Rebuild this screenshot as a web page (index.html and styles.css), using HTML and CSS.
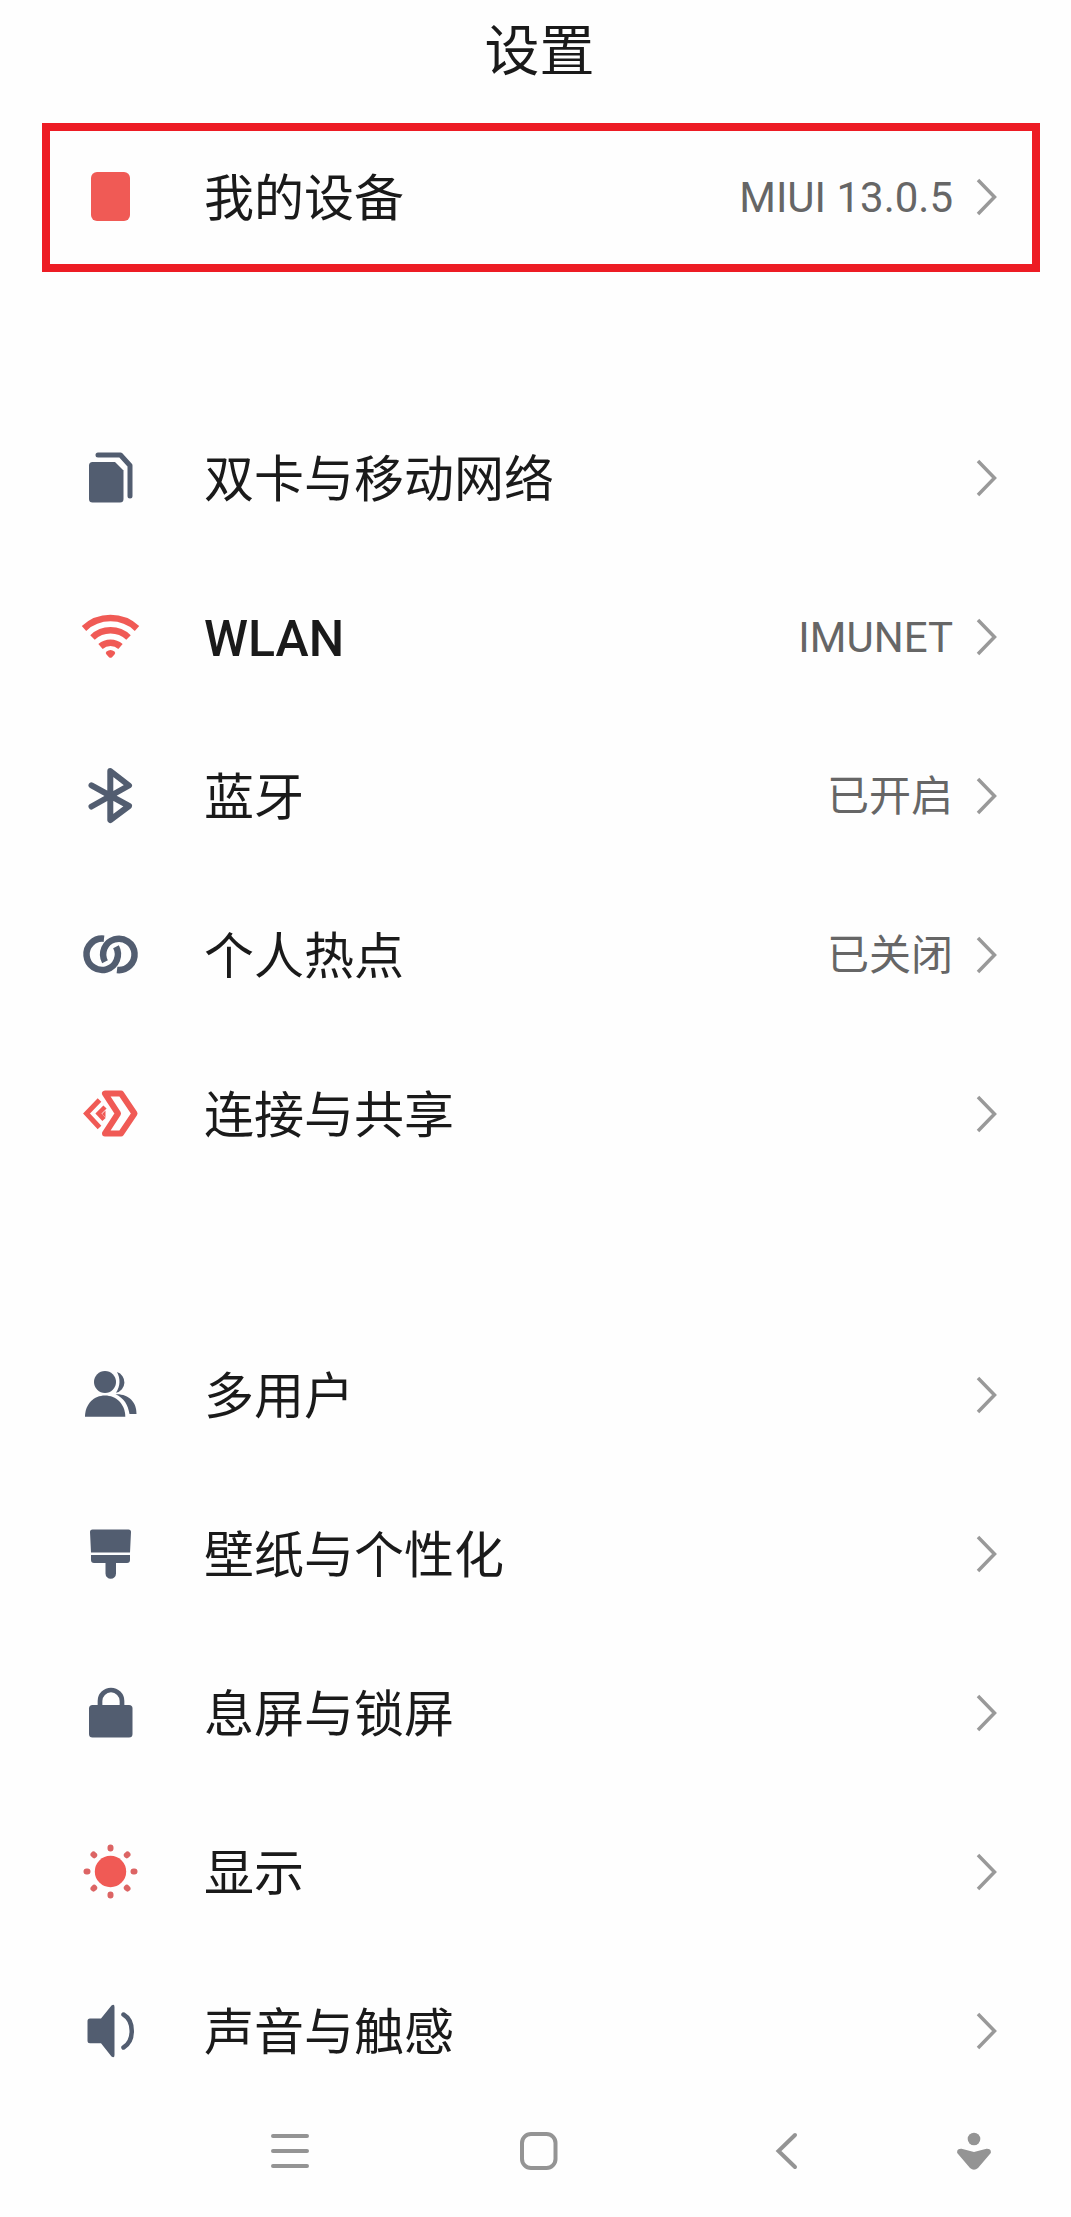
FILE: index.html
```html
<!DOCTYPE html>
<html lang="zh-CN">
<head>
<meta charset="utf-8">
<meta name="viewport" content="width=device-width, initial-scale=1">
<title>设置</title>
<link rel="stylesheet" href="styles.css">
</head>
<body>
<svg class="sprite" aria-hidden="true">
  <symbol id="chevron" viewBox="0 0 22 38"><path d="M2 2 18.500 19 2 36" fill="none" stroke="currentColor" stroke-width="3.500"/></symbol>
</svg>

<header class="header"><h1 class="title">设置</h1></header>

<main>
  <a class="row row-highlight" href="#device">
    <svg class="icon red" viewBox="0 0 61 61"><rect x="11" y="6" width="39" height="49" rx="6" fill="currentColor"/></svg>
    <span class="label">我的设备</span><span class="value">MIUI 13.0.5</span>
    <svg class="chevron"><use href="#chevron"/></svg>
  </a>

  <nav class="group" aria-label="网络与连接">
    <a class="row" href="#sim">
      <svg class="icon" viewBox="0 0 61 61"><path d="M12.500 15H35l8.500 8.500V52a3.500 3.500 0 0 1-3.500 3.500H12.500A3.500 3.500 0 0 1 9 52V18.500A3.500 3.500 0 0 1 12.500 15Z" fill="currentColor"/><path d="M18 8h22.500L50 18.500V49" fill="none" stroke="currentColor" stroke-width="5" stroke-linecap="round" stroke-linejoin="round"/></svg>
      <span class="label">双卡与移动网络</span>
      <svg class="chevron"><use href="#chevron"/></svg>
    </a>
    <a class="row" href="#wlan">
      <svg class="icon red" viewBox="0 0 61 61"><g fill="none" stroke="currentColor" stroke-width="6.500"><path d="M4 22.500A39 39 0 0 1 57 22.500"/><path d="M12.500 31.500A26 26 0 0 1 48.500 31.500"/><path d="M20.500 40.500A15 15 0 0 1 40.500 40.500"/></g><path d="M26.500 45.500Q30.500 42.500 34.500 45.500 36 47 34.500 48.500L32 51.200Q30.500 52.500 29 51.200L26.500 48.500Q25 47 26.500 45.500Z" fill="currentColor"/></svg>
      <span class="label label-strong">WLAN</span><span class="value">IMUNET</span>
      <svg class="chevron"><use href="#chevron"/></svg>
    </a>
    <a class="row" href="#bluetooth">
      <svg class="icon" viewBox="0 0 61 61"><path d="M11.500 20.300 49 41 30.300 55V6L49 20.500 11.500 41.500" fill="none" stroke="currentColor" stroke-width="6" stroke-linecap="round" stroke-linejoin="round"/></svg>
      <span class="label">蓝牙</span><span class="value">已开启</span>
      <svg class="chevron"><use href="#chevron"/></svg>
    </a>
    <a class="row" href="#hotspot">
      <svg class="icon" viewBox="0 0 61 61"><g fill="none" stroke="currentColor" stroke-width="6.500"><path d="M24 14.700A15.700 15.700 0 1 0 36 22.800"/><path d="M37 46A15.700 15.700 0 1 0 25 37.800"/></g></svg>
      <span class="label">个人热点</span><span class="value">已关闭</span>
      <svg class="chevron"><use href="#chevron"/></svg>
    </a>
    <a class="row" href="#share">
      <svg class="icon red" viewBox="0 0 61 61"><path d="M25 10.500H41L54.500 30.500 41 50.500H25L38 30.500Z" fill="none" stroke="currentColor" stroke-width="6" stroke-linejoin="round"/><path d="M19.500 17 6.500 30.500 19.500 44.500" fill="none" stroke="currentColor" stroke-width="5"/><path d="M25 24 18.500 30.500 24 36.500" fill="none" stroke="currentColor" stroke-width="4.500"/><path d="M22 31l3.500-3.500v7Z" fill="currentColor"/></svg>
      <span class="label">连接与共享</span>
      <svg class="chevron"><use href="#chevron"/></svg>
    </a>
  </nav>

  <nav class="group" aria-label="个性化与显示">
    <a class="row" href="#users">
      <svg class="icon" viewBox="0 0 61 61"><g fill="currentColor"><circle cx="25" cy="18" r="11"/><path d="M5 52.700C5 40 14 31.500 25 31.500S45.300 40 45.300 52.700Z"/><path d="M37 8A10.800 10.800 0 0 1 36 28.800C40.500 22 40.500 14.500 37 8Z"/><path d="M35.500 30.300C48 29.500 57 38 56.500 50H49.500C48 41 44 34 35.500 30.300Z"/></g></svg>
      <span class="label">多用户</span>
      <svg class="chevron"><use href="#chevron"/></svg>
    </a>
    <a class="row" href="#wallpaper">
      <svg class="icon" viewBox="0 0 61 61"><path d="M12.500 6.500h36q2.500 0 2.500 2.500l-1 20.500H11L10 9q0-2.500 2.500-2.500ZM11 32h39v5q0 3-3 3H36V50.500a5.200 5.200 0 0 1-10.500 0V40H14q-3 0-3-3Z" fill="currentColor"/></svg>
      <span class="label">壁纸与个性化</span>
      <svg class="chevron"><use href="#chevron"/></svg>
    </a>
    <a class="row" href="#lock">
      <svg class="icon" viewBox="0 0 61 61"><rect x="9" y="23" width="43.500" height="32.500" rx="3.500" fill="currentColor"/><path d="M20 25V19a11 11 0 0 1 22 0v6" fill="none" stroke="currentColor" stroke-width="4.700"/></svg>
      <span class="label">息屏与锁屏</span>
      <svg class="chevron"><use href="#chevron"/></svg>
    </a>
    <a class="row" href="#display">
      <svg class="icon red" viewBox="0 0 61 61"><circle cx="30.500" cy="30.500" r="15.700" fill="currentColor"/><path d="M30.500 6.500v1M30.500 53.500v1M6.500 30.500h1M53.500 30.500h1M13.500 13.500l.7.7M46.800 46.800l.7.7M13.500 47.500l.7-.7M46.800 14.200l.7-.7" stroke="#dc6464" stroke-width="6" stroke-linecap="round"/></svg>
      <span class="label">显示</span>
      <svg class="chevron"><use href="#chevron"/></svg>
    </a>
    <a class="row" href="#sound">
      <svg class="icon" viewBox="0 0 61 61"><path d="M10 18.500H21L31.500 5.500Q34.500 3.500 34.500 7V55Q34.500 58.500 31.500 56.500L21 43.300H10Q7.500 43.300 7.500 40.800V21Q7.500 18.500 10 18.500Z" fill="currentColor"/><path d="M43.500 14.500C54.500 21 54.500 41 43.500 47.500" fill="none" stroke="currentColor" stroke-width="4.500" stroke-linecap="round"/></svg>
      <span class="label">声音与触感</span>
      <svg class="chevron"><use href="#chevron"/></svg>
    </a>
  </nav>
</main>

<footer class="navbar">
  <button class="key" aria-label="最近任务"><svg class="key-icon" viewBox="0 0 40 40"><path d="M3 5H37M3 20H37M3 35H37" stroke="currentColor" stroke-width="4" stroke-linecap="round"/></svg></button>
  <button class="key" aria-label="主屏幕"><svg class="key-icon" viewBox="0 0 40 40"><rect x="3" y="3" width="33.500" height="34" rx="9" fill="none" stroke="currentColor" stroke-width="4"/></svg></button>
  <button class="key" aria-label="返回"><svg class="key-icon" viewBox="0 0 40 40"><path d="M28 4 11.500 20 28 36" fill="none" stroke="currentColor" stroke-width="4" stroke-linecap="round"/></svg></button>
  <button class="key" aria-label="收起"><svg class="key-icon" viewBox="0 0 40 40"><circle cx="20" cy="8" r="6.300" fill="currentColor"/><path d="M7.500 17.700 20 21 32.500 17.700Q37.500 17.500 36.800 22L24 37Q20 40.500 16 37L3.200 22Q2.500 17.500 7.500 17.700Z" fill="currentColor"/></svg></button>
</footer>
</body>
</html>
```
FILE: styles.css
```css
* {
  box-sizing: border-box;
}

body {
  margin: 0;
  background: #fefefe;
  color: #1a1a1a;
  font-family: Roboto, "Noto Sans CJK SC", sans-serif;
}

.sprite {
  display: none;
}

.header {
  height: 123px;
  padding: 18px 0 0 8px;
  text-align: center;
}

.title {
  margin: 0;
  font-size: 55px;
  font-weight: 400;
  line-height: 66px;
}

.row {
  display: flex;
  align-items: center;
  min-height: 159px;
  padding: 0 73px 0 80px;
  color: inherit;
  text-decoration: none;
}

.row-highlight {
  min-height: 149px;
  margin: 0 31px 0 42px;
  padding: 0 34px 2px 30px;
  border: 8px solid #ed1c24;
}

.group {
  margin-top: 122px;
}

.row-highlight + .group {
  margin-top: 126px;
}

.icon {
  flex: none;
  width: 61px;
  height: 61px;
  color: #525d70;
}

.red {
  color: #f05a55;
}

.label {
  flex: 1;
  margin-left: 63px;
  padding-top: 4px;
  font-size: 50px;
  line-height: 60px;
}

.label-strong {
  font-weight: 500;
}

.value {
  padding-top: 3px;
  color: #666;
  font-size: 42px;
  line-height: 60px;
}

.chevron {
  flex: none;
  width: 22px;
  height: 38px;
  margin-left: 23px;
  color: #999;
}

.navbar {
  display: grid;
  grid-template-columns: 2fr 2fr 2fr 1fr;
  padding: 21px 35px 46px 166px;
}

.key {
  display: flex;
  justify-content: center;
  padding: 0;
  border: 0;
  background: none;
  color: #949494;
}

.key-icon {
  width: 40px;
  height: 40px;
}
```
